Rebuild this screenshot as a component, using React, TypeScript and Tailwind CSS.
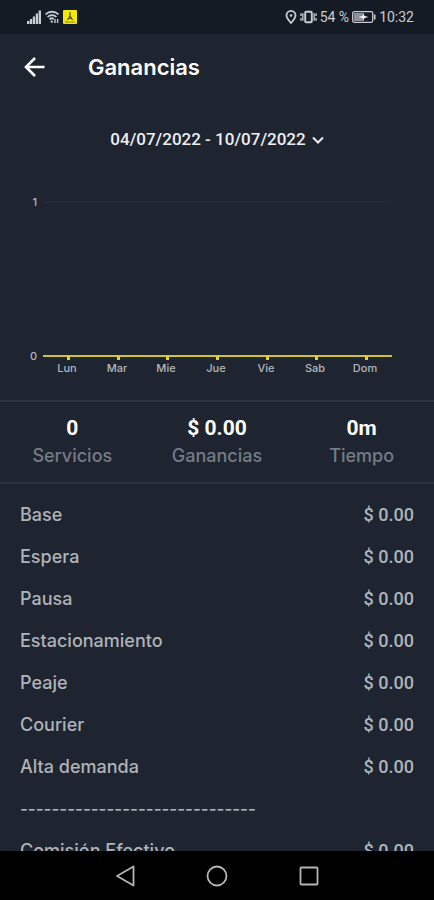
type Entry = {
  label: string
  amount?: string
}

const days = ["Lun", "Mar", "Mie", "Jue", "Vie", "Sab", "Dom"]

const totals = [
  { value: "0", label: "Servicios" },
  { value: "$ 0.00", label: "Ganancias" },
  { value: "0m", label: "Tiempo" },
]

const entries: Entry[] = [
  { label: "Base", amount: "$ 0.00" },
  { label: "Espera", amount: "$ 0.00" },
  { label: "Pausa", amount: "$ 0.00" },
  { label: "Estacionamiento", amount: "$ 0.00" },
  { label: "Peaje", amount: "$ 0.00" },
  { label: "Courier", amount: "$ 0.00" },
  { label: "Alta demanda", amount: "$ 0.00" },
  { label: "------------------------------" },
  { label: "Comisión Efectivo", amount: "$ 0.00" },
]

function StatusBar() {
  return (
    <div className="flex h-[34px] shrink-0 items-center justify-between bg-[#151b25] pr-5 pl-[27px] font-['Roboto',sans-serif] text-sm text-[#c9cdd2]">
      <div className="flex items-center gap-1">
        <svg className="h-3.5 w-3.5" viewBox="0 0 14 14" fill="currentColor">
          <path d="M0 11h2.500v3H0z" />
          <path d="M2.900 9h2.300v5H2.900z" />
          <path d="M5.800 6.500h2.300V14H5.800z" />
          <path d="M8.700 3.500H11V14H8.700z" />
          <path d="M11.600 0.500H14V14h-2.400z" />
        </svg>
        <svg className="h-3.5 w-3.5" viewBox="0 0 14 14" fill="none" stroke="currentColor" strokeWidth="1.8">
          <path d="M0.5 4.5C4 .8 10 .8 13.500 4.500" />
          <path d="M2.600 7c2.400-2.500 6.400-2.500 8.800 0" />
          <path d="M4.600 9.300c1.300-1.300 3-1.300 4.200-.2" />
          <circle cx="6.800" cy="11.600" r="1.200" fill="currentColor" stroke="none" />
          <path d="M10 9v4M12.600 9v4" strokeWidth="1.400" />
        </svg>
        <svg className="h-3.5 w-3.5" viewBox="0 0 14 14">
          <rect width="14" height="14" rx="1" fill="#f3e60b" />
          <path d="M7 2v4M7 6l-2.600 4M7 6l2.600 4M5.400 8.400h3.200" fill="none" stroke="#5d5a12" strokeWidth="1.300" />
          <path d="M2 12h10" stroke="#8d8712" strokeWidth="1" />
        </svg>
      </div>
      <div className="flex items-center gap-[3px]">
        <svg className="h-3.5 w-3" viewBox="0 0 12 14" fill="none" stroke="currentColor" strokeWidth="1.8">
          <path d="M6 13C3.200 9.800 1.500 7.600 1.500 5.400a4.500 4.500 0 0 1 9 0C10.500 7.600 8.800 9.800 6 13Z" />
          <circle cx="6" cy="5.500" r="1.300" fill="currentColor" stroke="none" />
        </svg>
        <svg className="h-3.5 w-[17px]" viewBox="0 0 18 14" fill="none" stroke="currentColor">
          <rect x="5.500" y="1.500" width="7" height="11" rx="1" strokeWidth="2" />
          <path d="M3 3v8M15 3v8" strokeWidth="1.400" />
          <path d="M1 3v3M1 8v3M17 3v3M17 8v3" strokeWidth="1.400" />
        </svg>
        <span>54 %</span>
        <svg className="h-3 w-6" viewBox="0 0 24 12" fill="none" stroke="currentColor">
          <rect x=".7" y=".7" width="20" height="10.600" rx="1.500" strokeWidth="1.300" />
          <rect x="2" y="2" width="10" height="8" fill="#8b9098" stroke="none" />
          <path d="M22.700 3.500v5" strokeWidth="1.600" />
          <path d="M6.500 6 10.500 5 11.500 3l1 2 4 1-4 1-1 2-1-2Z" fill="#fff" stroke="none" />
        </svg>
        <span>10:32</span>
      </div>
    </div>
  )
}

function Header() {
  return (
    <header className="flex h-[66px] shrink-0 items-center gap-[42px] px-6 text-white">
      <button type="button" aria-label="Volver">
        <svg className="h-6 w-[22px]" viewBox="0 0 22 24" fill="none" stroke="currentColor" strokeWidth="2.600">
          <path d="M20.500 12H2.500M11 3 2 12l9 9" />
        </svg>
      </button>
      <h1 className="text-[22px] font-semibold">Ganancias</h1>
    </header>
  )
}

function EarningsChart() {
  return (
    <svg className="w-full shrink-0" viewBox="0 0 434 220" role="img" aria-label="Ganancias por día">
      <line x1="44" y1="22" x2="391" y2="22" stroke="#29303d" />
      <line x1="43" y1="176" x2="392" y2="176" stroke="#cfc32f" strokeWidth="2" />
      <g fill="#b4b8be" fontSize="11" fontWeight="500">
        <text x="37" y="26" textAnchor="end">1</text>
        <text x="37" y="180" textAnchor="end">0</text>
        {days.map((day, i) => {
          const x = 67 + Math.round((i * 298) / 6)

          return (
            <g key={day}>
              <rect x={x} y="176" width="3" height="4" fill="#e0d22f" />
              <text x={x} y="192" textAnchor="middle">{day}</text>
            </g>
          )
        })}
      </g>
    </svg>
  )
}

function Totals() {
  return (
    <section className="grid shrink-0 grid-cols-3 border-y-2 border-[#2c333f] py-3 text-center">
      {totals.map((total) => (
        <div key={total.label}>
          <p className="font-['Roboto',sans-serif] text-[21px] leading-7 font-bold text-white">{total.value}</p>
          <p className="text-lg leading-7 font-medium text-[#767c86]">{total.label}</p>
        </div>
      ))}
    </section>
  )
}

function Breakdown() {
  return (
    <ul className="min-h-0 flex-1 overflow-y-auto px-5 pt-2.5 text-lg font-medium text-[#b0b3b8] [scrollbar-width:none]">
      {entries.map((entry) => (
        <li key={entry.label} className="flex h-[42px] items-center justify-between">
          <span className={entry.amount ? "" : "text-[17px]"}>{entry.label}</span>
          {entry.amount && <span className="font-['Roboto',sans-serif]">{entry.amount}</span>}
        </li>
      ))}
    </ul>
  )
}

function NavigationBar() {
  return (
    <nav className="flex h-[49px] shrink-0 items-center justify-center gap-[68px] bg-black text-[#b5b5b5]">
      <button type="button" aria-label="Atrás">
        <svg className="h-6 w-6" viewBox="0 0 24 24" fill="none" stroke="currentColor" strokeWidth="1.800" strokeLinejoin="round">
          <path d="M20.500 2.500v19L4 12Z" />
        </svg>
      </button>
      <button type="button" aria-label="Inicio">
        <svg className="h-6 w-6" viewBox="0 0 24 24" fill="none" stroke="currentColor" strokeWidth="1.800">
          <circle cx="12" cy="12" r="9.500" />
        </svg>
      </button>
      <button type="button" aria-label="Recientes">
        <svg className="h-6 w-6" viewBox="0 0 24 24" fill="none" stroke="currentColor" strokeWidth="1.800">
          <rect x="3.500" y="3.500" width="17" height="17" rx="1" />
        </svg>
      </button>
    </nav>
  )
}

export default function App() {
  return (
    <div className="flex h-screen flex-col bg-[#1e2430] font-['Inter',sans-serif]">
      <StatusBar />
      <Header />
      <div className="flex h-20 shrink-0 items-center justify-center">
        <button type="button" className="flex items-center gap-1.5 font-['Roboto',sans-serif] text-[17px] font-medium text-[#eceef0]">
          04/07/2022 - 10/07/2022
          <svg className="h-3 w-3" viewBox="0 0 12 12" fill="none" stroke="currentColor" strokeWidth="2">
            <path d="m1 3.500 5 5 5-5" />
          </svg>
        </button>
      </div>
      <EarningsChart />
      <Totals />
      <Breakdown />
      <NavigationBar />
    </div>
  )
}
